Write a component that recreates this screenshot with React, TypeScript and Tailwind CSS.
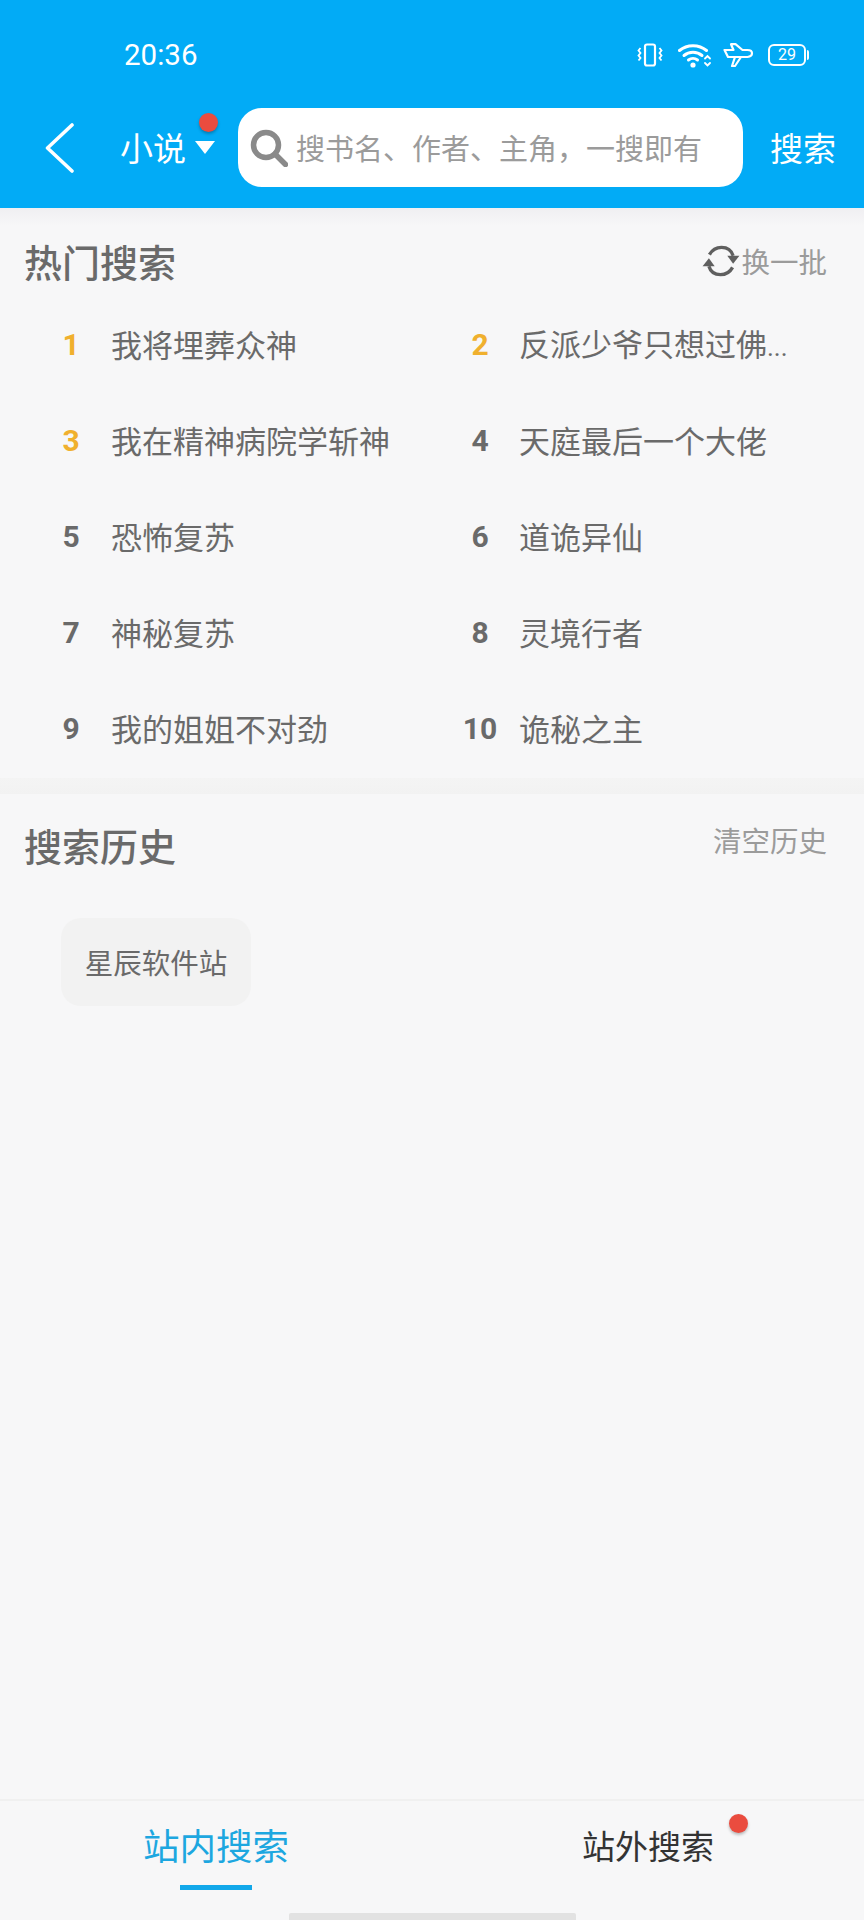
const hotList = [
  { rank: 1, title: '我将埋葬众神' },
  { rank: 2, title: '反派少爷只想过佛', cut: true },
  { rank: 3, title: '我在精神病院学斩神' },
  { rank: 4, title: '天庭最后一个大佬' },
  { rank: 5, title: '恐怖复苏' },
  { rank: 6, title: '道诡异仙' },
  { rank: 7, title: '神秘复苏' },
  { rank: 8, title: '灵境行者' },
  { rank: 9, title: '我的姐姐不对劲' },
  { rank: 10, title: '诡秘之主' },
]

function StatusIcons() {
  return (
    <div className="flex items-center">
      {/* vibrate */}
      <svg width="26" height="24" viewBox="0 0 26 24" fill="none" stroke="white" strokeWidth="2.2">
        <rect x="8" y="1.5" width="10" height="21" rx="2" />
        <path d="M3.5 5l-2 2.5 2 2.5-2 2.5 2 2.5-2 2.5" strokeWidth="1.8" />
        <path d="M22.5 5l2 2.5-2 2.5 2 2.5-2 2.5 2 2.5" strokeWidth="1.8" />
      </svg>
      {/* wifi */}
      <svg className="ml-[15px]" width="33" height="25" viewBox="0 0 33 25" fill="none" stroke="white" strokeWidth="3" strokeLinecap="round">
        <path d="M1.5 7.5C9 1 21 1 28.5 7.5" />
        <path d="M6 12.5c5-4.2 13-4.2 18 0" />
        <path d="M10.5 17c2.6-2 6.4-2 9 0" />
        <circle cx="15" cy="22" r="2.6" fill="white" stroke="none" />
        <path d="M27 15.5l2.5-2.5 2.5 2.5M27 20l2.5 2.5 2.5-2.5" strokeWidth="1.8" />
      </svg>
      {/* airplane */}
      <svg className="ml-[12px]" width="31" height="24" viewBox="0 0 31 24" fill="none" stroke="white" strokeWidth="2.2" strokeLinejoin="round">
        <path d="M1.5 7h9L8 1.2h4.5l7 5.8h5c6 0 6 6.5 0 7H5z" />
        <path d="M12 14l-3 9h3l6-9" />
      </svg>
      {/* battery */}
      <div className="ml-[14px] flex items-center">
        <div className="w-[38px] h-[22px] rounded-[6px] border-2 border-white flex items-center justify-center text-white text-[16px] leading-none font-['Roboto',sans-serif]">
          29
        </div>
        <div className="w-[2px] h-[10px] bg-white rounded-r-[2px] ml-[1px]" />
      </div>
    </div>
  )
}

export default function App() {
  return (
    <div className="relative w-[864px] h-[1920px] overflow-hidden flex flex-col bg-[#f7f7f8] font-['Noto_Sans_CJK_SC','Noto_Sans',sans-serif]">
      <header className="h-[208px] shrink-0 bg-[#02abf6] text-white">
        <div className="mt-[33px] h-[44px] pl-[124px] pr-[55px] flex items-center justify-between">
          <span className="text-[29.5px] font-['Roboto',sans-serif]">20:36</span>
          <StatusIcons />
        </div>
        <div className="mt-[31px] h-[79px] flex items-center">
          <svg className="ml-[44px] shrink-0" width="32" height="50" viewBox="0 0 32 50" fill="none" stroke="white" strokeWidth="3.6" strokeLinecap="round" strokeLinejoin="round">
            <path d="M28 2L3.5 25 28 48" />
          </svg>
          <span className="ml-[44px] text-[33px] leading-none shrink-0">小说</span>
          <div className="relative ml-[9px] w-[21px] h-[79px] shrink-0">
            <span className="absolute left-0 top-[33px] w-0 h-0 border-l-[10.5px] border-r-[10.5px] border-t-[13px] border-l-transparent border-r-transparent border-t-white" />
            <span className="absolute left-[4px] top-[5px] w-[19px] h-[19px] rounded-full bg-[#ea4c3f] shadow-[0_2px_3px_rgba(0,0,0,0.25)]" />
          </div>
          <div className="ml-[22px] w-[505px] h-[79px] shrink-0 rounded-[24px] bg-white flex items-center pl-[12px]">
            <svg width="38" height="38" viewBox="0 0 38 38" fill="none" stroke="#8a8a8a" strokeWidth="5.5">
              <circle cx="16" cy="16" r="12.5" />
              <path d="M25 25l10.5 10.5" strokeLinecap="round" />
            </svg>
            <span className="ml-[8px] text-[29px] leading-none text-[#9b9b9b] whitespace-nowrap">{'搜书名、作者、主角\uFF0C一搜即有'}</span>
          </div>
          <span className="ml-[27px] text-[33px] leading-none whitespace-nowrap">搜索</span>
        </div>
      </header>

      <section className="shrink-0">
        <div className="h-[18px] bg-gradient-to-b from-[#f0eff2] to-[#f7f7f8]" />
        <div className="h-[72px] pl-[24px] pr-[37px] flex items-center justify-between pb-[2px]">
          <h2 className="text-[38px] leading-none font-medium text-[#6a6a6a]">热门搜索</h2>
          <div className="flex items-center">
            <svg width="40" height="34" viewBox="0 0 38 32" fill="none" stroke="#5f5f5f" strokeWidth="3.2">
              <path d="M8 10c2.500-4.500 6.500-7 11.500-7 5.500 0 9.500 3 11 8" />
              <path d="M30 22c-2.500 4.500-6.500 7-11.500 7-5.500 0-9.500-3-11-8" />
              <path d="M25 11h11.500L30.500 18.500z" fill="#5f5f5f" stroke="none" />
              <path d="M1.500 21H13L7.500 13.500z" fill="#5f5f5f" stroke="none" />
            </svg>
            <span className="text-[28.5px] leading-none text-[#9b9b9b]">换一批</span>
          </div>
        </div>
        <div className="grid grid-cols-[408px_1fr]">
          {hotList.map((item) => (
            <div key={item.rank} className={`h-[96px] flex items-center pb-[2px] ${item.rank % 2 === 1 ? 'pl-[40px]' : 'pl-[41px]'}`}>
              <span
                className={`w-[62px] text-center text-[30px] leading-none font-bold font-['Roboto',sans-serif] ${item.rank <= 3 ? 'text-[#f0b02e]' : 'text-[#6a6a6a]'}`}
              >
                {item.rank}
              </span>
              <span className={`${item.rank % 2 === 1 ? 'ml-[9px]' : 'ml-[8px]'} mb-[4px] text-[31px] leading-none text-[#6a6a6a] whitespace-nowrap`}>
                {item.title}
                {item.cut && <span className="font-['Roboto',sans-serif] text-[26px]">...</span>}
              </span>
            </div>
          ))}
        </div>
      </section>

      <div className="h-[16px] shrink-0 bg-gradient-to-b from-[#f4f4f4] to-[#f2f2f2]" />

      <section className="flex-1">
        <div className="pl-[24px] pr-[37px] pt-[30px] flex items-start justify-between">
          <h2 className="text-[38px] leading-[42px] font-medium text-[#6a6a6a]">搜索历史</h2>
          <span className="text-[28.5px] leading-[36px] text-[#9b9b9b] mt-[-2px]">清空历史</span>
        </div>
        <div className="mt-[52px] ml-[61px] w-[190px] h-[88px] rounded-[20px] bg-[#f2f2f2] flex items-center justify-center">
          <span className="text-[28.5px] leading-none text-[#6a6a6a]">星辰软件站</span>
        </div>
      </section>

      <nav className="h-[121px] shrink-0 border-t-2 border-[#f0f0f0] flex flex-col">
        <div className="flex">
          <div className="w-[432px] pl-[143px] pt-[22px]">
            <span className="block text-[36.5px] leading-[44px] text-[#1da7e0]">站内搜索</span>
            <div className="ml-[37px] mt-[18px] w-[72px] h-[5px] bg-[#12a8ea]" />
          </div>
          <div className="relative pl-[150px] pt-[22px]">
            <span className="block text-[33px] leading-[44px] text-[#333333] whitespace-nowrap">站外搜索</span>
            <span className="absolute left-[297px] top-[13px] w-[19px] h-[19px] rounded-full bg-[#ea4c3f] shadow-[0_2px_3px_rgba(0,0,0,0.25)]" />
          </div>
        </div>
        <div className="mt-auto mx-auto w-[287px] h-[7px] bg-[#e2e2e2] rounded-t-[2px]" />
      </nav>
    </div>
  )
}
